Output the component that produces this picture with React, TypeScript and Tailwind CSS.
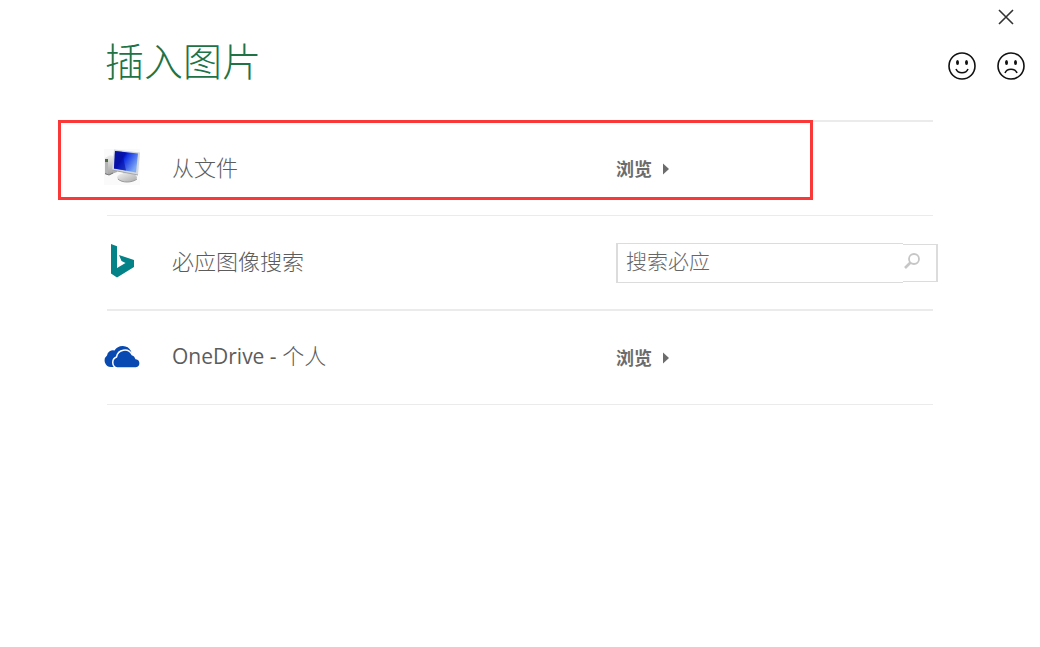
import React from "react";

const ComputerIcon = () => (
  <svg width="36" height="36" viewBox="0 0 36 36" aria-hidden="true">
    <defs>
      <linearGradient id="screen" x1="0" y1="0" x2="1" y2="0.6">
        <stop offset="0" stopColor="#0a14a8" />
        <stop offset="0.4" stopColor="#0511b4" />
        <stop offset="0.5" stopColor="#1232e4" />
        <stop offset="1" stopColor="#7fa9f4" />
      </linearGradient>
      <linearGradient id="tower" x1="0" y1="0" x2="0" y2="1">
        <stop offset="0" stopColor="#f0f0f0" />
        <stop offset="1" stopColor="#a2a2a2" />
      </linearGradient>
      <linearGradient id="stand" x1="0" y1="0" x2="1" y2="1">
        <stop offset="0" stopColor="#f4f4f4" />
        <stop offset="1" stopColor="#a8a8a8" />
      </linearGradient>
    </defs>
    <rect width="36" height="36" fill="#fafafa" />
    <path d="M1 9 L6 6 L13 8 V23 L5 26 L1 25 Z" fill="url(#tower)" />
    <path d="M1 10 L4 11 V26 L1 25 Z" fill="#b4b4b4" />
    <rect x="1" y="10" width="3" height="3" fill="#4c6b3e" />
    <path d="M1 24.5 L5 26 L9 24" stroke="#777" fill="none" />
    <path d="M19 23 L28 24 L27 28 H20 Z" fill="#c9c9c9" />
    <ellipse cx="23" cy="28.5" rx="10" ry="4.5" fill="url(#stand)" />
    <path d="M14 30 C18 34 28 34 33 30" stroke="#9b9b9b" fill="none" />
    <path d="M10 0.5 L36 3.5 L34 26 L8 21 Z" fill="#d3d8dd" />
    <path d="M11 2 L34 4.5 L32 23.5 L10 19.5 Z" fill="url(#screen)" />
    <path d="M11 2 L18 2.8 L22 21.6 L10 19.5 Z" fill="#0610a0" opacity="0.6" />
    <path d="M8 21 L34 26" stroke="#a2a7ac" fill="none" />
  </svg>
);

const BingIcon = () => (
  <svg width="36" height="36" viewBox="0 0 36 36" aria-hidden="true">
    <path
      d="M7 1 L13 3.2 V25 L21.5 20 L17.5 18 L15 12 L30 17 V24 L13 34.5 L7 30.5 Z"
      fill="#038387"
    />
  </svg>
);

const OneDriveIcon = () => (
  <svg width="36" height="36" viewBox="0 0 36 36" aria-hidden="true">
    <path
      d="M7 29 A6.5 6.5 0 0 1 3 17.5 A6 6 0 0 1 10.5 12.5 A9.5 9.5 0 0 1 27 13 L27.5 16 L20 24 L12 29 Z"
      fill="#094ab2"
    />
    <path
      d="M13 30 A5.8 5.8 0 0 1 12.5 19 A8.3 8.3 0 0 1 28 16.5 A5.5 5.5 0 0 1 32 20.5 A4.8 4.8 0 0 1 32 30 Z"
      fill="#094ab2"
      stroke="#fff"
      strokeWidth="1.5"
    />
  </svg>
);

const FaceIcon: React.FC<{ mouth: string }> = ({ mouth }) => (
  <svg width="28" height="28" viewBox="0 0 28 28" aria-hidden="true">
    <circle cx="14" cy="14" r="13" fill="none" stroke="#111" strokeWidth="1.6" />
    <ellipse cx="9.5" cy="10.5" rx="1.5" ry="2.5" fill="#111" />
    <ellipse cx="18.5" cy="10.5" rx="1.5" ry="2.5" fill="#111" />
    <path d={mouth} fill="none" stroke="#111" strokeWidth="1.6" />
  </svg>
);

const BrowseButton: React.FC<{ label: string }> = ({ label }) => (
  <button
    type="button"
    aria-label={label}
    className="flex items-center gap-[11px] text-lg leading-6 font-bold text-[#6c6c6c]"
  >
    浏览
    <svg width="6" height="12" viewBox="0 0 6 12" aria-hidden="true">
      <path d="M0 0.5 L6 6 L0 11.5 Z" fill="#6c6c6c" />
    </svg>
  </button>
);

const SearchBox = () => (
  <form
    className="-mr-[5px] flex h-10 items-center"
    onSubmit={(e) => e.preventDefault()}
  >
    <input
      type="text"
      aria-label="搜索必应"
      placeholder="搜索必应"
      className="h-10 min-w-0 flex-1 border-y border-l-2 border-[#dcdcdc] px-2 pb-1 text-[21px] outline-none placeholder:text-[#666]"
    />
    <button
      type="submit"
      aria-label="搜索"
      className="h-[38px] w-[35px] border-y border-r-2 border-[#dcdcdc] pb-1"
    >
      <svg width="18" height="16" viewBox="0 0 18 16" aria-hidden="true">
        <circle cx="11" cy="6" r="5" fill="none" stroke="#c6c6c6" strokeWidth="1.8" />
        <path d="M7.5 9.5 L2 15" stroke="#c6c6c6" strokeWidth="2.6" />
      </svg>
    </button>
  </form>
);

interface RowProps {
  icon: React.ReactNode;
  title: React.ReactNode;
  border: string;
  highlighted?: boolean;
  children: React.ReactNode;
}

const SourceRow: React.FC<RowProps> = ({
  icon,
  title,
  border,
  highlighted,
  children,
}) => (
  <li
    className={`relative grid grid-cols-[65px_minmax(0,444fr)_minmax(0,317fr)] items-center border-[#ebebeb] ${border}`}
  >
    <span className="-ml-[3px] pb-1">{icon}</span>
    <span className="pb-1 text-[22px] leading-8">{title}</span>
    <div>{children}</div>
    {highlighted && (
      <div className="pointer-events-none absolute -top-[2px] -left-[49px] h-20 w-[755px] border-3 border-[#fb3838]" />
    )}
  </li>
);

export default function App() {
  return (
    <main className="min-h-screen bg-white font-['Open_Sans','Noto_Sans_CJK_SC',sans-serif] font-light text-[#5c5c5c]">
      <header className="flex h-[120px] justify-between pr-[15px] pl-[105px]">
        <h1 className="pt-[35px] text-[39px] leading-[52px] text-[#217346]">
          插入图片
        </h1>
        <div className="flex flex-col items-end pt-[9px]">
          <button type="button" aria-label="关闭" className="mr-[11px]">
            <svg width="16" height="16" viewBox="0 0 16 16" aria-hidden="true">
              <path
                d="M1 1 L15 15 M15 1 L1 15"
                stroke="#333"
                strokeWidth="1.6"
              />
            </svg>
          </button>
          <div className="flex gap-[21px] pt-[27px]">
            <button type="button" aria-label="微笑">
              <FaceIcon mouth="M8 17 C10 22 18 22 20 17" />
            </button>
            <button type="button" aria-label="哭脸">
              <FaceIcon mouth="M8 21 C10 16 18 16 20 21" />
            </button>
          </div>
        </div>
      </header>
      <ul className="mx-[107px] grid grid-rows-[94px_95px_94px] border-t-2 border-[#ebebeb]">
        <SourceRow
          icon={<ComputerIcon />}
          title="从文件"
          border="border-b"
          highlighted
        >
          <BrowseButton label="浏览文件" />
        </SourceRow>
        <SourceRow icon={<BingIcon />} title="必应图像搜索" border="border-b-2">
          <SearchBox />
        </SourceRow>
        <SourceRow
          icon={<OneDriveIcon />}
          title={
            <>
              <span className="text-[21px] font-normal">OneDrive -</span> 个人
            </>
          }
          border="border-b"
        >
          <BrowseButton label="浏览 OneDrive" />
        </SourceRow>
      </ul>
    </main>
  );
}
